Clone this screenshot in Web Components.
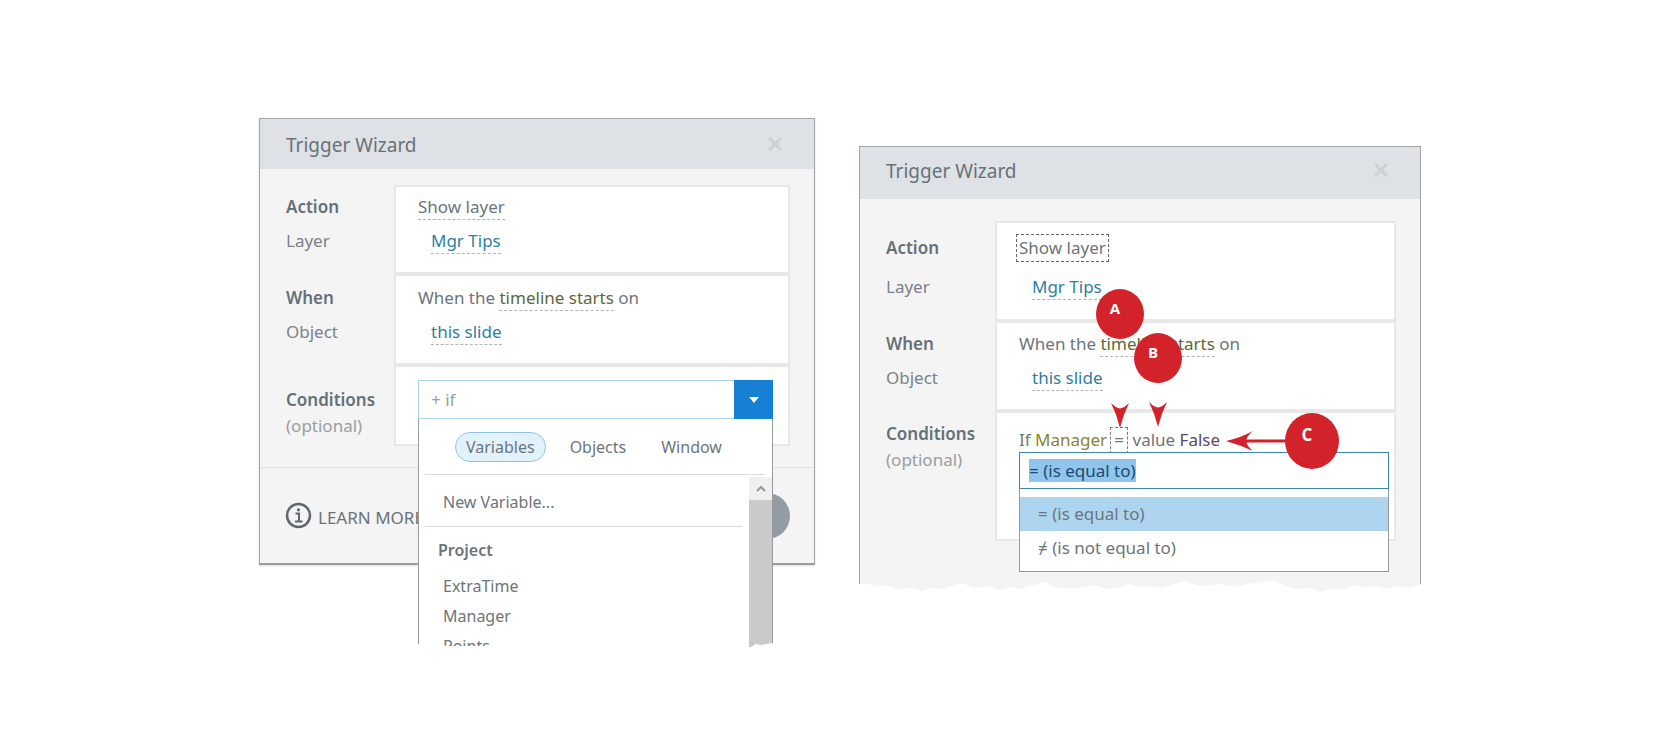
<!DOCTYPE html>
<html lang="en">
<head>
<meta charset="utf-8">
<title>Trigger Wizard</title>
<style>
  body { margin: 0; min-height: 100vh; background: #fff; color: #6d757b; font: 17px/24px "Noto Sans", "Open Sans", sans-serif; }
  main { max-width: 1162px; margin: 0 auto; padding: 118px 0 60px; display: grid; grid-template-columns: 556fr 562fr; gap: 44px; align-items: start; }
  .second { position: relative; margin-top: 28px; }
  .second wizard-dialog { --head: 52px; --head-gap: 6px; --top: 22px; --label: 135px; }
  .action { --row: 89px; --pad: 10px; --gap: 10px; }
  .when { --row: 91px; --pad: 12px; --gap: 10px; }
  .conditions { --row: 81px; --pad: 23px; --gap: 2px; --content: 13px; }
  .second .action { --row: 100px; --pad: 15px; --gap: 15px; }
  .second .when { --row: 90px; --pad: 11px; }
  .second .conditions { --row: 130px; --pad: 11px; --content: 15px; }
  call-out { position: absolute; }
  .a { left: 237px; top: 143px; }
  .b { left: 275px; top: 187px; }
  .c { left: 426px; top: 267px; --w: 54px; --h: 56px; --letter: 17px; }
  call-arrow { position: absolute; }
  .arrow-a { left: 252px; top: 257px; }
  .arrow-b { left: 290px; top: 256px; }
  .arrow-c { left: 367px; top: 284px; }
</style>
</head>
<body>
<main>
  <wizard-dialog>
    <wizard-row class="action">
      <span slot="label">Action</span><span slot="sub">Layer</span>
      <div><pick-link>Show layer</pick-link></div>
      <div><pick-link tone="blue" indent>Mgr Tips</pick-link></div>
    </wizard-row>
    <wizard-row class="when">
      <span slot="label">When</span><span slot="sub">Object</span>
      <div>When the <pick-link tone="olive">timeline starts</pick-link> on</div>
      <div><pick-link tone="blue" indent>this slide</pick-link></div>
    </wizard-row>
    <wizard-row class="conditions" optional>
      <span slot="label">Conditions</span><span slot="sub">(optional)</span>
      <variable-picker></variable-picker>
    </wizard-row>
    <wizard-footer slot="footer"></wizard-footer>
  </wizard-dialog>

  <div class="second">
    <wizard-dialog torn>
      <wizard-row class="action">
        <span slot="label">Action</span><span slot="sub">Layer</span>
        <div><pick-link focused>Show layer</pick-link></div>
        <div><pick-link tone="blue" indent>Mgr Tips</pick-link></div>
      </wizard-row>
      <wizard-row class="when">
        <span slot="label">When</span><span slot="sub">Object</span>
        <div>When the <pick-link tone="olive">timeline starts</pick-link> on</div>
        <div><pick-link tone="blue" indent>this slide</pick-link></div>
      </wizard-row>
      <wizard-row class="conditions" optional>
        <span slot="label">Conditions</span><span slot="sub">(optional)</span>
        <operator-picker></operator-picker>
      </wizard-row>
    </wizard-dialog>
    <call-arrow class="arrow-a"></call-arrow>
    <call-arrow class="arrow-b"></call-arrow>
    <call-arrow class="arrow-c" side></call-arrow>
    <call-out class="a">A</call-out>
    <call-out class="b">B</call-out>
    <call-out class="c">C</call-out>
  </div>
</main>

<script>
const define = (name, html, setup) => {
  const template = document.createElement('template');
  template.innerHTML = html;
  customElements.define(name, class extends HTMLElement {
    constructor() {
      super();
      this.attachShadow({ mode: 'open' }).append(template.content.cloneNode(true));
    }
    connectedCallback() { if (setup) setup(this, this.shadowRoot); }
  });
};

define('wizard-dialog', `
<style>
  :host { display: block; }
  section { box-sizing: border-box; border: 1px solid #a0a5a9; border-bottom: 2px solid #999da0; background: #f4f4f4; box-shadow: 0 1px 2px #ddd; }
  header { box-sizing: border-box; height: var(--head, 50px); padding: 0 25px 0 26px; display: flex; align-items: center; justify-content: space-between; background: #dee2e6; }
  h2, button { margin: 0 0 var(--head-gap, 0); }
  h2 { padding-top: 2px; font-size: 19px; line-height: 26px; font-weight: 400; color: #697178; }
  button { padding: 0 7px; border: 0; background: none; display: flex; }
  .rows { padding: var(--top, 16px) 24px 0 0; }
  :host([torn]) section { border-bottom: 0; padding-bottom: 52px; box-shadow: none; }
</style>
<section>
  <header><h2>Trigger Wizard</h2>
    <button aria-label="Close"><svg width="14" height="14" viewBox="0 0 14 14"><path d="M1 1l12 12M13 1L1 13" stroke="#cdd1d4" stroke-width="3"/></svg></button>
  </header>
  <div class="rows"><slot></slot></div>
  <slot name="footer"></slot>
</section>`, (host, root) => {
  if (!host.hasAttribute('torn')) return;
  const edge = [[0,9],[2,9],[3,6],[5,8],[7,3],[9,5],[11,2],[13,5],[15,4],[17,8],[18,10],[21,5],[23,7],[25,3],[27,6],[29,4],[31,8],[33,11],[35,6],[38,4],[40,6],[42,8],[44,4],[46,5],[48,9],[50,6],[52,7],[54,5],[56,9],[58,12],[60,8],[62,7],[64,9],[67,6],[69,9],[72,11],[74,12],[76,7],[78,4],[80,5],[82,1],[84,4],[86,3],[88,8],[90,6],[92,7],[94,4],[96,7],[98,5],[100,9]];
  root.querySelector('section').style.clipPath = 'polygon(0 0,' +
    edge.map(([x, y]) => `${x}% calc(100% - ${y}px)`).join() + ',100% 0)';
});

define('wizard-row', `
<style>
  :host { display: grid; grid-template-columns: var(--label, 134px) 1fr; min-height: var(--row); }
  .names { padding: var(--pad) 0 0 26px; display: flex; flex-direction: column; gap: var(--gap); }
  .names b { font-weight: 600; color: #667077; }
  .names span { color: #7b8288; }
  :host([optional]) .names span { color: #999ea2; }
  .panel { box-sizing: border-box; border: 2px solid #e7e8e9; background: #fff; padding: calc(var(--content, var(--pad)) - 2px) 15px 0 22px; display: flex; flex-direction: column; gap: var(--gap); }
  :host([optional]) .panel { padding-top: var(--content); }
</style>
<div class="names"><b><slot name="label"></slot></b><span><slot name="sub"></slot></span></div>
<div class="panel"><slot></slot></div>`);

define('pick-link', `
<style>
  :host { display: inline-block; }
  :host([indent]) { margin-left: 13px; }
  a { display: block; margin-bottom: -1px; border-bottom: 1px dashed #b3b3b3; color: #6d757b; text-decoration: none; }
  :host([tone=blue]) a { color: #2f7f9f; }
  :host([tone=olive]) a { color: #5c6a35; }
  :host([focused]) a { margin: -2px -4px -2px -3px; padding: 1px 2px; border: 1px dashed #666; }
</style>
<a href="#"><slot></slot></a>`);

define('wizard-footer', `
<style>
  :host { display: flex; align-items: center; justify-content: space-between; height: 95px; margin-top: 21px; padding: 0 24px 0 25px; border-top: 1px solid #e1e2e3; }
  a { display: flex; align-items: center; gap: 6px; color: #697279; text-decoration: none; }
  span { padding-top: 4px; }
  button { width: 46px; height: 46px; border: 0; border-radius: 50%; background: #949ca3; }
</style>
<a href="#"><svg width="27" height="27" viewBox="0 0 27 27" fill="none" stroke="#5f686e"><circle cx="13.500" cy="13.500" r="11.500" stroke-width="2.500"/><path d="M10.500 11.500h3.500v8M10 19.500h7.500" stroke-width="2"/><circle cx="13.500" cy="7.800" r="1.600" fill="#5f686e" stroke="none"/></svg><span>LEARN MORE</span></a>
<button aria-label="Next"></button>`);

define('variable-picker', `
<style>
  :host { display: block; position: relative; }
  .combo { box-sizing: border-box; height: 39px; display: flex; }
  input { box-sizing: border-box; flex: 1; min-width: 0; border: 1px solid #add1e2; border-right: 0; padding: 0 12px; background: #fff; font: inherit; outline: 0; }
  input::placeholder { color: #999fa4; opacity: 1; }
  .open { width: 39px; border: 0; background: #1681d4; display: grid; place-items: center; padding: 0; }
  .list { position: absolute; top: 39px; left: 0; right: 0; height: 228px; box-sizing: border-box; overflow: hidden; border: 1px solid #969ca0; border-width: 0 1px; background: #fff; font-size: 16px; display: flex; flex-direction: column;
    clip-path: polygon(0 0, 100% 0, 100% 224px, 98% 225px, 97% 226px, 95% 225px, 94% 228px, 20% 227px, 8% 227px, 6% 225px, 0 225px); }
  .tabs { box-sizing: border-box; height: 56px; margin: 0 7px 0 6px; padding: 13px 0 12px 30px; display: flex; gap: 13px; border-bottom: 1px solid #d9dbdc; }
  .tabs button { box-sizing: border-box; height: 30px; border: 1px solid transparent; border-radius: 15px; padding: 0 10px; background: none; color: #6d757b; font: inherit; line-height: 28px; }
  .tabs [aria-selected=true] { border-color: #8fc5de; background: #e1f2fb; }
  .scroll { flex: 1; display: flex; gap: 7px; min-height: 0; padding-top: 2px; }
  .items { flex: 1; padding-left: 6px; }
  .new { box-sizing: border-box; height: 50px; padding: 13px 18px 0; border-bottom: 1px solid #d9dbdc; }
  h3 { margin: 0; padding: 11px 13px 9px; font-size: 16px; line-height: 24px; font-weight: 600; }
  ul { margin: 0; padding: 0 18px; list-style: none; line-height: 30px; }
  .bar { width: 23px; background: #cacaca; }
  .bar button { width: 23px; height: 23px; padding: 0; border: 0; background: #f0f0f0; display: grid; place-items: center; }
</style>
<div class="combo">
  <input placeholder="+ if" aria-label="Condition">
  <button class="open" aria-label="Open list"><svg width="12" height="8" viewBox="0 0 12 8"><path d="M1 1h10L6 7z" fill="#fff"/></svg></button>
</div>
<div class="list">
  <div class="tabs" role="tablist"><button role="tab" aria-selected="true">Variables</button><button role="tab">Objects</button><button role="tab">Window</button></div>
  <div class="scroll">
    <div class="items">
      <div class="new">New Variable...</div>
      <h3>Project</h3>
      <ul><li>ExtraTime</li><li>Manager</li><li>Points</li></ul>
    </div>
    <div class="bar"><button aria-label="Scroll up"><svg width="12" height="9" viewBox="0 0 12 9"><path d="M2 7l4-4 4 4" fill="none" stroke="#999" stroke-width="2"/></svg></button></div>
  </div>
</div>`);

define('operator-picker', `
<style>
  :host { display: block; margin-right: -10px; position: relative; }
  .sentence { height: 24px; white-space: nowrap; }
  .name { color: #87852c; }
  .false { color: #5e4668; }
  .op { display: inline-block; width: 16px; height: 26px; margin: -1px 0 -3px 3px; border: 1px dashed #777; border-bottom: 0; text-align: center; vertical-align: top; }
  .box { position: absolute; top: 24px; left: 0; right: 0; background: #fff; }
  .field { box-sizing: border-box; height: 37px; border: 1px solid #3f86b2; padding: 6px 9px; display: flex; align-items: center; }
  input { box-sizing: border-box; field-sizing: content; height: 23px; padding: 0; border: 0; background: #90c5ee; color: #1f4a6e; font: inherit; outline: 0; }
  ul { margin: 0; padding: 8px 0 6px; list-style: none; border: 1px solid #929a9f; border-top: 0; }
  li { padding: 5px 18px; }
  [aria-selected=true] { background: #aed5ef; }
</style>
<div class="sentence">If <span class="name">Manager</span><span class="op">=</span> value <span class="false">False</span></div>
<div class="box">
  <div class="field"><input value="= (is equal to)" aria-label="Operator"></div>
  <ul role="listbox"><li role="option" aria-selected="true">= (is equal to)</li><li role="option">≠ (is not equal to)</li></ul>
</div>`);

define('call-out', `
<style>
  :host { display: block; }
  div { box-sizing: border-box; width: var(--w, 48px); height: var(--h, 50px); padding: 0 10px 12px 0; border-radius: 50%; background: #d2232a; color: #fff; font: bold var(--letter, 15px)/20px "Open Sans", sans-serif; display: grid; place-items: center; }
</style>
<div><slot></slot></div>`);

define('call-arrow', `
<style>
  :host { display: block; }
  svg { display: block; fill: #d2232a; }
  .side, :host([side]) .down { display: none; }
  :host([side]) .side { display: block; }
</style>
<svg class="down" width="18" height="25" viewBox="0 0 18 25"><path d="M0 0Q5 5 9 5.500Q13 5 18 0Q12 12 9 25Q6 12 0 0z"/></svg>
<svg class="side" width="66" height="22" viewBox="0 0 66 22"><path d="M0 11Q14 8 27 1Q21 6 20.500 9.500H66V12.500H20.500Q21 16 27 21Q14 15 0 11z"/></svg>`);
</script>
</body>
</html>
